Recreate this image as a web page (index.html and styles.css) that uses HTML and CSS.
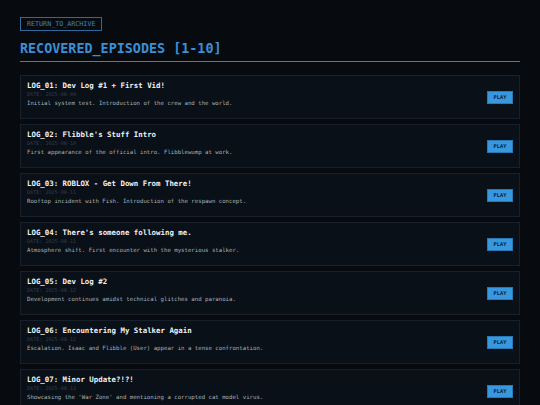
FILE: index.html
```html
<!DOCTYPE html>
<html lang="en">
<head>
    <meta charset="UTF-8">
    <meta name="viewport" content="width=device-width, initial-scale=1.0">
    <title>Recovered Episodes</title>
    <link rel="stylesheet" href="styles.css">
</head>
<body>
    <div class="container">
        <a class="back-btn" href="#">RETURN_TO_ARCHIVE</a>
        <h1>RECOVERED_EPISODES [1-10]</h1>
        <div class="episode-list">
            <div class="episode">
                <div class="info">
                    <div class="title">LOG_01: Dev Log #1 + First Vid!</div>
                    <div class="date">DATE: 2025-08-09</div>
                    <div class="desc">Initial system test. Introduction of the crew and the world.</div>
                </div>
                <button class="play">PLAY</button>
            </div>
            <div class="episode">
                <div class="info">
                    <div class="title">LOG_02: Flibble's Stuff Intro</div>
                    <div class="date">DATE: 2025-08-10</div>
                    <div class="desc">First appearance of the official intro. Flibblewump at work.</div>
                </div>
                <button class="play">PLAY</button>
            </div>
            <div class="episode">
                <div class="info">
                    <div class="title">LOG_03: ROBLOX - Get Down From There!</div>
                    <div class="date">DATE: 2025-08-11</div>
                    <div class="desc">Rooftop incident with Fish. Introduction of the respawn concept.</div>
                </div>
                <button class="play">PLAY</button>
            </div>
            <div class="episode">
                <div class="info">
                    <div class="title">LOG_04: There's someone following me.</div>
                    <div class="date">DATE: 2025-08-11</div>
                    <div class="desc">Atmosphere shift. First encounter with the mysterious stalker.</div>
                </div>
                <button class="play">PLAY</button>
            </div>
            <div class="episode">
                <div class="info">
                    <div class="title">LOG_05: Dev Log #2</div>
                    <div class="date">DATE: 2025-08-12</div>
                    <div class="desc">Development continues amidst technical glitches and paranoia.</div>
                </div>
                <button class="play">PLAY</button>
            </div>
            <div class="episode">
                <div class="info">
                    <div class="title">LOG_06: Encountering My Stalker Again</div>
                    <div class="date">DATE: 2025-08-12</div>
                    <div class="desc">Escalation. Isaac and Flibble (User) appear in a tense confrontation.</div>
                </div>
                <button class="play">PLAY</button>
            </div>
            <div class="episode">
                <div class="info">
                    <div class="title">LOG_07: Minor Update?!?!</div>
                    <div class="date">DATE: 2025-08-13</div>
                    <div class="desc">Showcasing the 'War Zone' and mentioning a corrupted cat model virus.</div>
                </div>
                <button class="play">PLAY</button>
            </div>
        </div>
    </div>
</body>
</html>
```

FILE: styles.css
```css
body { font-family: 'DejaVu Sans Mono', 'Liberation Mono', monospace; background: #070b10; margin: 0; padding: 0; min-height: 100vh;}
.container { padding: 17px 20px 20px 20px;}
.back-btn { display: block; width: max-content; font-size: 6.7px; line-height: 8px; color: #3f86c2; border: 1px solid #2f6a9a; padding: 2px 6px; text-decoration: none;}
h1 { font-size: 13.4px; line-height: 16px; color: #3d8fd6; margin: 10px 0 13px 0; padding-bottom: 4px; border-bottom: 1px solid #3b7fbc; font-weight: bold;}
.episode-list { display: flex; flex-direction: column; gap: 5px;}
.episode { display: flex; align-items: center; justify-content: space-between; background: #0a1017; border: 1px solid #18212b; height: 42px; padding: 0 6px; box-sizing: content-box;}
.info { align-self: flex-start; padding-top: 6px; display: flex; flex-direction: column;}
.title { color: #f0f2f4; font-weight: bold; font-size: 7.4px; line-height: 8px; height: 8px;}
.date { color: #343d47; font-size: 5.1px; line-height: 7px; height: 7px; margin-top: 1px;}
.desc { color: #a8b0b9; font-size: 5.7px; line-height: 8px; height: 8px; margin-top: 1px;}
.play { background: #3798e0; color: #0b1a28; border: 1px solid #2a78b4; font-family: inherit; font-weight: bold; font-size: 5.3px; width: 26px; height: 13px; padding: 0; cursor: pointer;}
```
